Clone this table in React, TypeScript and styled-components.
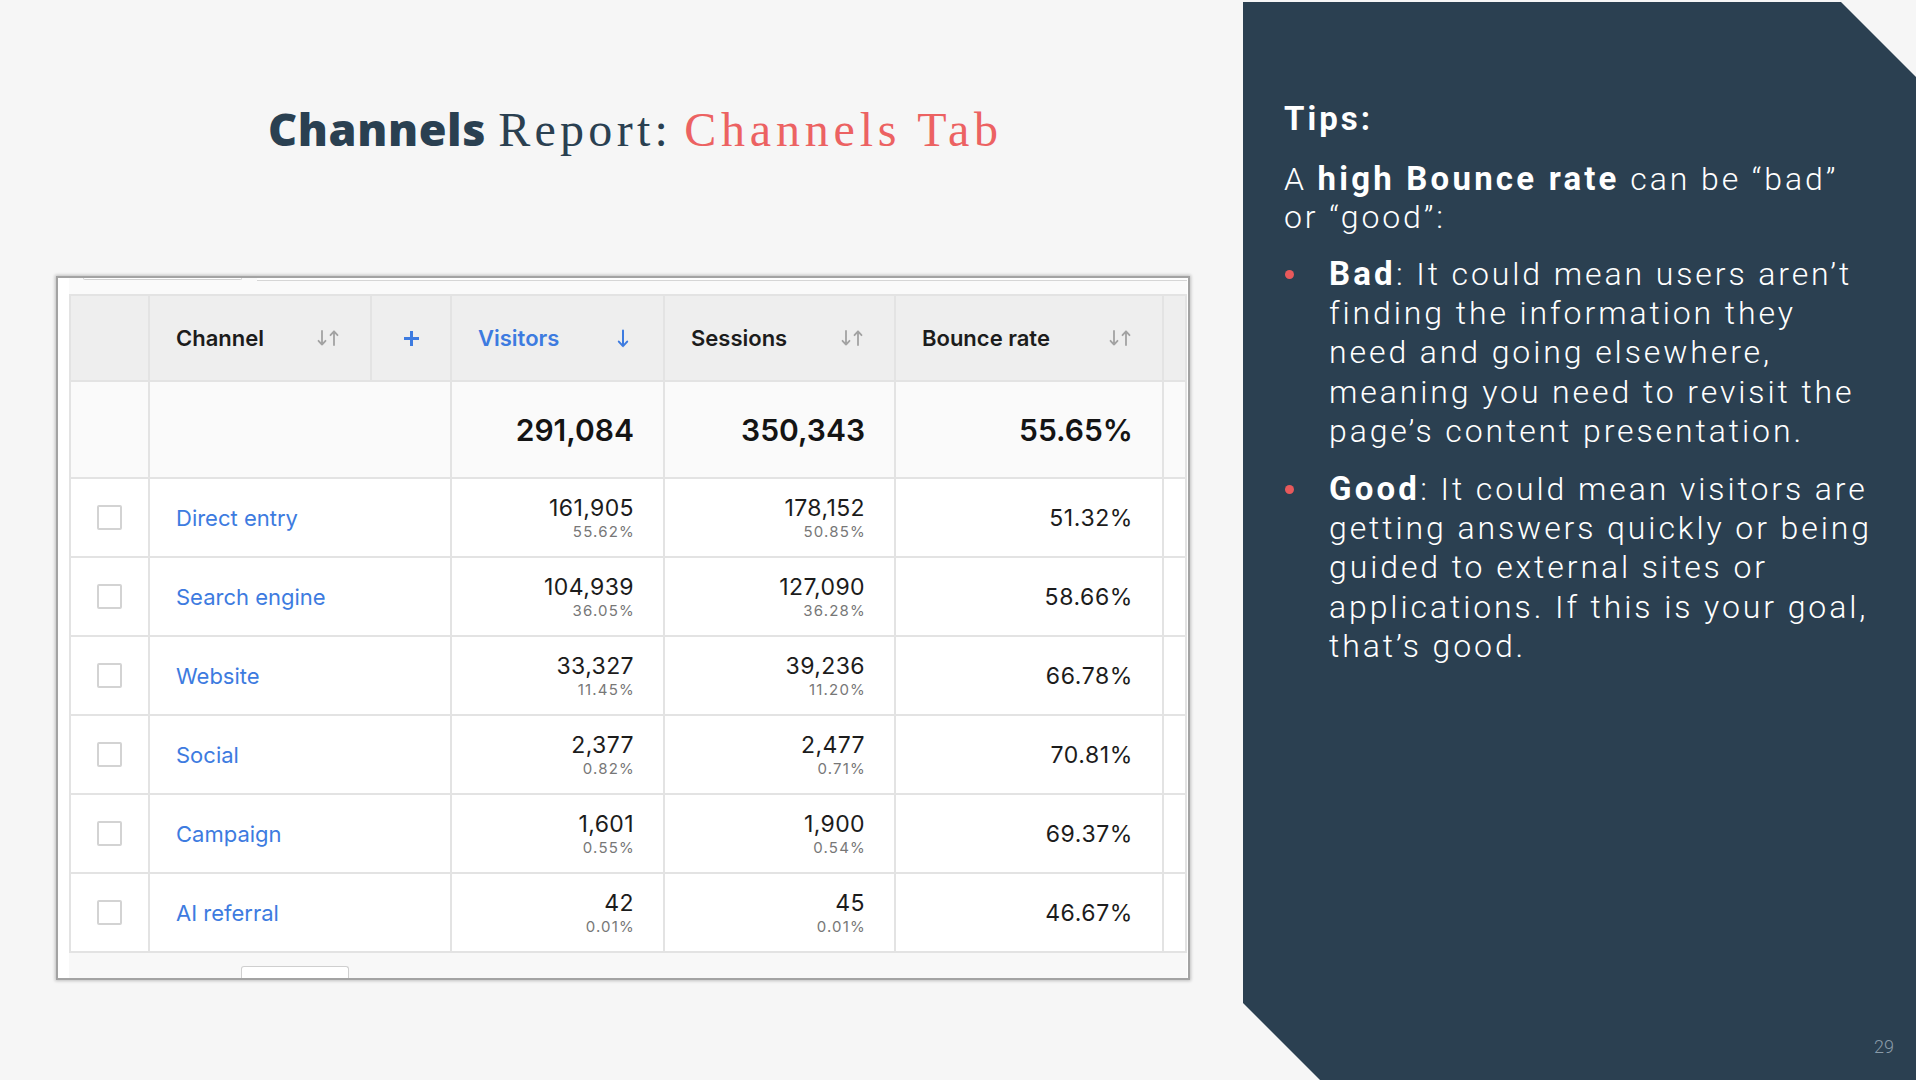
import React from "react";
import styled, { createGlobalStyle } from "styled-components";

const GlobalStyle = createGlobalStyle`
  html, body { margin: 0; padding: 0; }
  body { background: #f6f6f6; width: 1916px; height: 1080px; overflow: hidden; }
  * { box-sizing: border-box; }
`;

const BLUE = "#3d7be0";
const LINE = "#e3e3e3";

const Slide = styled.div`
  display: grid;
  grid-template-columns: 1243px 673px;
  width: 1916px;
  height: 1080px;
  background: #f6f6f6;
`;

const Main = styled.section`
  display: flex;
  flex-direction: column;
`;

const Title = styled.h1`
  margin: 0;
  padding: 101px 0 0 268px;
  font-family: "Liberation Serif", serif;
  font-weight: 400;
  font-size: 48px;
  line-height: 56px;
  white-space: nowrap;
`;

const TitleBold = styled.span`
  font-family: "Open Sans", sans-serif;
  font-weight: 800;
  font-size: 45px;
  color: #2a4051;
  letter-spacing: 0.6px;
`;

const TitleSerif = styled.span<{ $accent?: boolean }>`
  color: ${(p) => (p.$accent ? "#ec6262" : "#2a4051")};
  letter-spacing: ${(p) => (p.$accent ? "4.8px" : "4.3px")};
`;

const Card = styled.div`
  margin: 118px 0 0 56px;
  width: 1134px;
  height: 704px;
  background: #fff;
  border: 2px solid #a3a3a3;
  box-shadow: 0 0 3px 1px rgba(0, 0, 0, 0.22);
  display: flex;
  flex-direction: column;
  padding: 0 1px 0 11px;
`;

const Strip = styled.div`
  height: 16px;
  background: #fafafa;
  display: flex;
  align-items: flex-start;
`;

const TabStub = styled.div`
  margin-left: 14px;
  width: 159px;
  height: 2px;
  background: #fff;
  border: 1px solid #d2d2d2;
  border-top: none;
  border-radius: 0 0 3px 3px;
`;

const TabLine = styled.div`
  flex: 1;
  margin-left: 15px;
  height: 3px;
  border-bottom: 1px solid #d6d6d6;
  background: #fff;
`;

const Grid = styled.div`
  display: grid;
  grid-template-columns: 79px 222px 80px 213px 231px 268px 23px;
  grid-template-rows: 86px 97px repeat(6, 79px);
  border-top: 2px solid ${LINE};
  border-left: 2px solid ${LINE};
  font-family: Inter, "Liberation Sans", sans-serif;
  color: #1c1c1c;
`;

const Cell = styled.div<{ $bg?: string; $span?: number }>`
  min-width: 0;
  background: ${(p) => p.$bg ?? "#fff"};
  border-right: 2px solid ${LINE};
  border-bottom: 2px solid ${LINE};
  ${(p) => (p.$span ? `grid-column: span ${p.$span};` : "")}
`;

const HeadCell = styled(Cell)<{ $active?: boolean; $center?: boolean; $padR?: number }>`
  background: #eeeeee;
  display: flex;
  align-items: center;
  justify-content: ${(p) => (p.$center ? "center" : "space-between")};
  padding: ${(p) => (p.$center ? "0" : `0 ${p.$padR ?? 29}px 0 26px`)};
  font-size: 22px;
  font-weight: 600;
  color: ${(p) => (p.$active ? BLUE : "#1c1c1c")};
`;

const TotalCell = styled(Cell)`
  background: #fafafa;
  display: flex;
  align-items: center;
  justify-content: flex-end;
  padding-right: 29px;
  font-size: 30px;
  font-weight: 600;
  color: #141414;
`;

const CheckCell = styled(Cell)`
  display: flex;
  align-items: center;
  justify-content: center;
`;

const Checkbox = styled.span`
  width: 25px;
  height: 25px;
  border: 2px solid #d3d3d3;
  border-radius: 2px;
  background: #fff;
`;

const ChannelCell = styled(Cell)`
  grid-column: span 2;
  display: flex;
  align-items: center;
  padding-left: 26px;
  font-size: 22px;
  font-weight: 400;
  color: ${BLUE};
`;

const MetricCell = styled(Cell)`
  display: flex;
  flex-direction: column;
  align-items: flex-end;
  justify-content: center;
  padding-right: 29px;
`;

const Num = styled.span`
  font-size: 23px;
  line-height: 26px;
  letter-spacing: 0.4px;
  color: #1c1c1c;
`;

const Pct = styled.span`
  margin-top: 2px;
  margin-right: -1px;
  font-size: 15px;
  line-height: 18px;
  letter-spacing: 1.2px;
  color: #777;
`;

const RateCell = styled(Cell)`
  display: flex;
  align-items: center;
  justify-content: flex-end;
  padding-right: 29px;
  font-size: 23px;
  letter-spacing: 0.6px;
  color: #1c1c1c;
`;

const Footer = styled.div`
  flex: 1;
  background: #f8f8f8;
  display: flex;
  align-items: flex-end;
`;

const FooterTab = styled.div`
  margin-left: 172px;
  width: 108px;
  height: 12px;
  background: #fff;
  border: 1px solid #cfcfcf;
  border-bottom: none;
  border-radius: 3px 3px 0 0;
`;

const Panel = styled.aside`
  margin-top: 2px;
  height: 1078px;
  background: #2b4051;
  clip-path: polygon(0 0, 598px 0, 100% 75px, 100% 100%, 77px 100%, 0 calc(100% - 77px));
  display: flex;
  flex-direction: column;
  padding: 98px 0 0 41px;
  color: #fff;
  font-family: Roboto, "Liberation Sans", sans-serif;
`;

const Tips = styled.h2`
  margin: 0;
  font-size: 33px;
  font-weight: 700;
  line-height: 38px;
  letter-spacing: 3px;
`;

const Lead = styled.p`
  margin: 22px 0 0;
  font-size: 32px;
  font-weight: 300;
  line-height: 38px;
  letter-spacing: 2.9px;
  white-space: nowrap;
`;

const Strong = styled.strong`
  font-size: 33px;
  line-height: 1;
  font-weight: 700;
  letter-spacing: 3.2px;
`;

const List = styled.ul`
  margin: 19px 0 0;
  padding: 0;
  list-style: none;
  display: flex;
  flex-direction: column;
  gap: 19px;
`;

const Item = styled.li`
  display: grid;
  grid-template-columns: 45px 1fr;
  font-size: 32px;
  font-weight: 300;
  line-height: 39.2px;
  letter-spacing: 2.9px;
  white-space: nowrap;
`;

const Dot = styled.span`
  width: 9px;
  height: 9px;
  margin: 15px 0 0 1px;
  border-radius: 50%;
  background: #e8595b;
`;

const PageNo = styled.div`
  margin-top: auto;
  align-self: flex-end;
  margin-right: 22px;
  margin-bottom: 24px;
  font-size: 18px;
  line-height: 18px;
  font-weight: 300;
  color: #8a9ba8;
`;

const SortIcon = () => (
  <svg width="24" height="18" viewBox="0 0 24 18" fill="none" stroke="#a2a2a2" strokeWidth="1.8" strokeLinecap="round" strokeLinejoin="round">
    <path d="M5 2 V15.5 M1.5 11.8 L5 15.6 L8.5 11.8" />
    <path d="M17 16 V2.5 M13.5 6.2 L17 2.4 L20.5 6.2" />
  </svg>
);

const DownArrow = () => (
  <svg width="12" height="19" viewBox="0 0 12 19" fill="none" stroke={BLUE} strokeWidth="2" strokeLinecap="round" strokeLinejoin="round">
    <path d="M6 1.5 V17 M1.8 12.6 L6 17.2 L10.2 12.6" />
  </svg>
);

const PlusIcon = () => (
  <svg width="17" height="17" viewBox="0 0 17 17" fill="none" stroke={BLUE} strokeWidth="3" strokeLinecap="butt">
    <path d="M8.5 1 V16 M1 8.5 H16" />
  </svg>
);

type Row = { name: string; v: string; vp: string; s: string; sp: string; b: string };

const rows: Row[] = [
  { name: "Direct entry", v: "161,905", vp: "55.62%", s: "178,152", sp: "50.85%", b: "51.32%" },
  { name: "Search engine", v: "104,939", vp: "36.05%", s: "127,090", sp: "36.28%", b: "58.66%" },
  { name: "Website", v: "33,327", vp: "11.45%", s: "39,236", sp: "11.20%", b: "66.78%" },
  { name: "Social", v: "2,377", vp: "0.82%", s: "2,477", sp: "0.71%", b: "70.81%" },
  { name: "Campaign", v: "1,601", vp: "0.55%", s: "1,900", sp: "0.54%", b: "69.37%" },
  { name: "AI referral", v: "42", vp: "0.01%", s: "45", sp: "0.01%", b: "46.67%" },
];

export default function App() {
  return (
    <>
      <GlobalStyle />
      <Slide>
        <Main>
          <Title>
            <TitleBold>Channels</TitleBold> <TitleSerif>Report:</TitleSerif>{" "}
            <TitleSerif $accent>Channels Tab</TitleSerif>
          </Title>
          <Card>
            <Strip>
              <TabStub />
              <TabLine />
            </Strip>
            <Grid>
              <HeadCell $center />
              <HeadCell>
                <span>Channel</span>
                <SortIcon />
              </HeadCell>
              <HeadCell $center>
                <PlusIcon />
              </HeadCell>
              <HeadCell $active $padR={34}>
                <span>Visitors</span>
                <DownArrow />
              </HeadCell>
              <HeadCell>
                <span>Sessions</span>
                <SortIcon />
              </HeadCell>
              <HeadCell>
                <span>Bounce rate</span>
                <SortIcon />
              </HeadCell>
              <HeadCell $center />

              <Cell $bg="#fafafa" />
              <Cell $bg="#fafafa" $span={2} />
              <TotalCell>291,084</TotalCell>
              <TotalCell>350,343</TotalCell>
              <TotalCell>55.65%</TotalCell>
              <Cell $bg="#fafafa" />

              {rows.map((r) => (
                <React.Fragment key={r.name}>
                  <CheckCell>
                    <Checkbox />
                  </CheckCell>
                  <ChannelCell>{r.name}</ChannelCell>
                  <MetricCell>
                    <Num>{r.v}</Num>
                    <Pct>{r.vp}</Pct>
                  </MetricCell>
                  <MetricCell>
                    <Num>{r.s}</Num>
                    <Pct>{r.sp}</Pct>
                  </MetricCell>
                  <RateCell>{r.b}</RateCell>
                  <Cell />
                </React.Fragment>
              ))}
            </Grid>
            <Footer>
              <FooterTab />
            </Footer>
          </Card>
        </Main>
        <Panel>
          <Tips>Tips:</Tips>
          <Lead>
            A <Strong>high Bounce rate</Strong> can be “bad”
            <br />
            or “good”:
          </Lead>
          <List>
            <Item>
              <Dot />
              <span>
                <Strong>Bad</Strong>: It could mean users aren’t
                <br />
                finding the information they
                <br />
                need and going elsewhere,
                <br />
                meaning you need to revisit the
                <br />
                page’s content presentation.
              </span>
            </Item>
            <Item>
              <Dot />
              <span>
                <Strong>Good</Strong>: It could mean visitors are
                <br />
                getting answers quickly or being
                <br />
                guided to external sites or
                <br />
                applications. If this is your goal,
                <br />
                that’s good.
              </span>
            </Item>
          </List>
          <PageNo>29</PageNo>
        </Panel>
      </Slide>
    </>
  );
}
